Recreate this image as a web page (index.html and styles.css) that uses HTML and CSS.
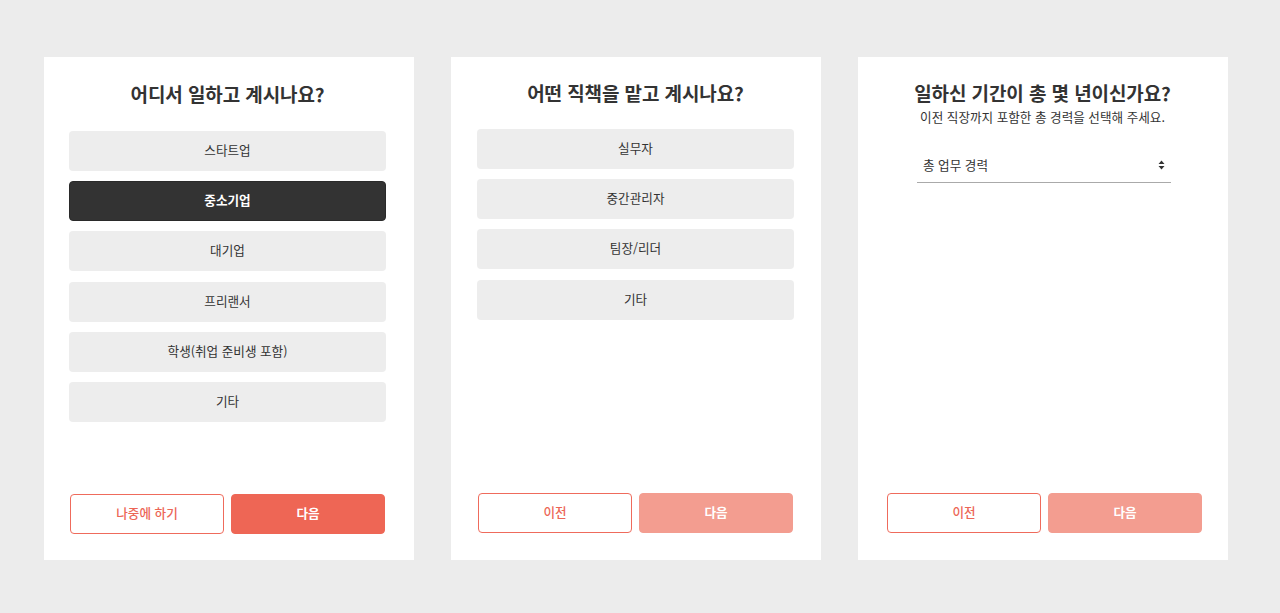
FILE: index.html
```html
<!DOCTYPE html>
<html lang="ko">
<head>
<meta charset="utf-8">
<link rel="stylesheet" href="styles.css">
</head>
<body>
<div class="page">
  <section class="card card-first">
    <h2 class="title">어디서 일하고 계시나요?</h2>
    <div class="options">
      <div class="option">스타트업</div>
      <div class="option selected">중소기업</div>
      <div class="option">대기업</div>
      <div class="option">프리랜서</div>
      <div class="option">학생(취업 준비생 포함)</div>
      <div class="option">기타</div>
    </div>
    <div class="actions">
      <button class="btn btn-outline">나중에 하기</button>
      <button class="btn btn-primary">다음</button>
    </div>
  </section>

  <section class="card">
    <h2 class="title">어떤 직책을 맡고 계시나요?</h2>
    <div class="options">
      <div class="option">실무자</div>
      <div class="option">중간관리자</div>
      <div class="option">팀장/리더</div>
      <div class="option">기타</div>
    </div>
    <div class="actions">
      <button class="btn btn-outline">이전</button>
      <button class="btn btn-primary disabled">다음</button>
    </div>
  </section>

  <section class="card card-third">
    <h2 class="title">일하신 기간이 총 몇 년이신가요?</h2>
    <p class="subtitle">이전 직장까지 포함한 총 경력을 선택해 주세요.</p>
    <div class="select">
      <span class="select-label">총 업무 경력</span>
      <svg class="select-arrows" width="7" height="10" viewBox="0 0 7 10"><path d="M3.5 0.5 L6.5 4 L0.5 4 Z M0.5 6 L6.5 6 L3.5 9.5 Z" fill="#333"/></svg>
    </div>
    <div class="actions">
      <button class="btn btn-outline">이전</button>
      <button class="btn btn-primary disabled">다음</button>
    </div>
  </section>
</div>
</body>
</html>
```

FILE: styles.css
```css
* { box-sizing: border-box; }
html, body { margin: 0; padding: 0; }
body {
  background: #ececec;
  font-family: "Noto Sans CJK KR", "Noto Sans", sans-serif;
  color: #333;
  height: 613px;
}
.page {
  display: flex;
  gap: 37px;
  padding: 57px 0 0 44px;
}
.card {
  width: 370px;
  height: 503px;
  background: #fff;
  display: flex;
  flex-direction: column;
  padding: 22px 27px 27px 26px;
}
.card-first {
  padding: 23px 28px 26px 25px;
}
.title {
  margin: 0;
  font-size: 19px;
  line-height: 28px;
  font-weight: 700;
  text-align: center;
  color: #333;
  letter-spacing: -0.1px;
}
.card-first .options { margin-top: 23px; }
.subtitle {
  margin: 0;
  font-size: 12.6px;
  line-height: 20px;
  text-align: center;
  color: #333;
}
.options {
  margin-top: 22px;
  display: flex;
  flex-direction: column;
  gap: 10.2px;
}
.option {
  height: 40px;
  border-radius: 4px;
  background: #ededed;
  display: flex;
  align-items: center;
  justify-content: center;
  font-size: 12.6px;
  color: #333;
  padding-bottom: 3px;
}
.option.selected {
  background: #333;
  color: #fff;
  font-weight: 700;
  border: 1px solid #2a2a2a;
}
.select {
  margin: 22px 30px 0 33px;
  height: 34px;
  border-bottom: 1px solid #aaa;
  display: flex;
  align-items: center;
  justify-content: space-between;
  padding: 0 6px 3px 6px;
  font-size: 12.6px;
  color: #333;
}
.select-arrows { display: block; margin-top: 2px; }
.actions {
  margin-top: auto;
  display: flex;
  gap: 7px;
  padding-left: 1px;
}
.card-third .actions { padding-left: 3px; padding-right: 0; }
.btn {
  flex: 0 0 154px;
  height: 40px;
  border-radius: 4px;
  font-family: inherit;
  font-size: 12.6px;
  font-weight: 500;
  display: flex;
  align-items: center;
  justify-content: center;
  padding: 0 0 3px;
}
.btn-outline {
  background: #fff;
  border: 1px solid #ef6b5c;
  color: #ec6656;
}
.btn-primary {
  background: #ee6655;
  border: 1px solid #ee6655;
  color: #fff;
  font-weight: 700;
}
.btn-primary.disabled {
  background: #f39d90;
  border-color: #f39d90;
}
```
